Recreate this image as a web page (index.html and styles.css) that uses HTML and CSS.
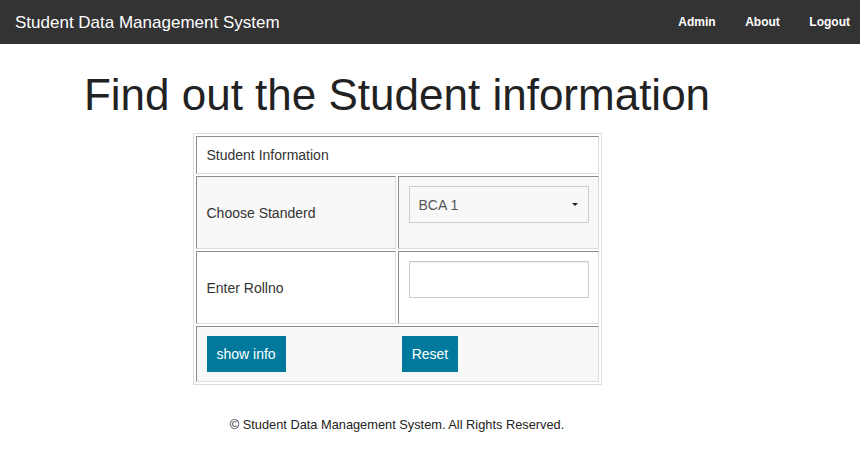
FILE: index.html
```html
<!DOCTYPE html>
<html lang="en">
<head>
<meta charset="utf-8">
<title>Student Data Management System</title>
<link rel="stylesheet" href="styles.css">
</head>
<body>
<nav class="navbar">
  <span class="brand">Student Data Management System</span>
  <ul class="nav-links">
    <li><a href="#">Admin</a></li>
    <li><a href="#">About</a></li>
    <li><a href="#">Logout</a></li>
  </ul>
</nav>
<main class="page">
  <h1 class="title">Find out the Student information</h1>
  <table class="info-table">
    <colgroup>
      <col class="col-label">
      <col class="col-field">
    </colgroup>
    <tr class="row-plain">
      <td colspan="2" class="cell head-cell">Student Information</td>
    </tr>
    <tr class="row-striped">
      <td class="cell field-row">Choose Standerd</td>
      <td class="cell field-row">
        <div class="select-wrap">
          <select class="form-control select">
            <option>BCA 1</option>
            <option>BCA 2</option>
            <option>BCA 3</option>
          </select>
          <span class="caret"></span>
        </div>
      </td>
    </tr>
    <tr class="row-plain">
      <td class="cell field-row">Enter Rollno</td>
      <td class="cell field-row">
        <input class="form-control text-input" type="text">
      </td>
    </tr>
    <tr class="row-striped">
      <td colspan="2" class="cell actions">
        <button class="btn" type="button">show info</button><button class="btn btn-reset" type="reset">Reset</button>
      </td>
    </tr>
  </table>
  <footer class="footer">© Student Data Management System. All Rights Reserved.</footer>
</main>
</body>
</html>
```
FILE: styles.css
```css
* { box-sizing: border-box; }

html, body {
  margin: 0;
  padding: 0;
  background: #fff;
  font-family: "Liberation Sans", Arial, sans-serif;
  font-size: 14px;
  color: #333;
}

.navbar {
  height: 44px;
  background: #333;
  display: flex;
  align-items: center;
  justify-content: space-between;
  padding: 1px 10px 0 15px;
}

.brand {
  color: #fff;
  font-size: 17px;
  line-height: 43px;
}

.nav-links {
  list-style: none;
  margin: 0;
  padding: 0;
  display: flex;
  gap: 29.5px;
}

.nav-links a {
  color: #fff;
  font-weight: bold;
  font-size: 12px;
  line-height: 43px;
  text-decoration: none;
}

.page {
  width: 794px;
  display: flex;
  flex-direction: column;
  align-items: center;
}

.title {
  margin: 27px 0 14px;
  font-size: 44px;
  line-height: 48px;
  font-weight: normal;
  color: #222;
}

.info-table {
  border-collapse: separate;
  border-spacing: 2px;
  border: 1px solid #ddd;
  table-layout: fixed;
  width: 409px;
}

.col-label { width: 200px; }
.col-field { width: 201px; }

.cell {
  border-style: solid;
  border-width: 1px;
  border-color: #8c8c8c #dcdcdc #dcdcdc #8c8c8c;
  padding: 8px 10px;
  line-height: 20px;
  vertical-align: middle;
}

.row-striped .cell { background: #f8f8f8; }
.row-plain .cell { background: #fff; }

.field-row {
  height: 73px;
  padding: 9px 10px 25px;
}

.field-row:first-child {
  padding: 8px 10px;
}

.form-control {
  display: block;
  width: 180px;
  height: 37px;
  border: 1px solid #ccc;
  font-family: "Liberation Sans", Arial, sans-serif;
  font-size: 14px;
  color: #555;
  padding: 0 9px;
  margin: 0;
  border-radius: 0;
}

.select-wrap {
  position: relative;
  width: 180px;
}

.select {
  appearance: none;
  -webkit-appearance: none;
  background: transparent;
}

.caret {
  position: absolute;
  right: 11px;
  top: 17px;
  width: 0;
  height: 0;
  border-left: 3px solid transparent;
  border-right: 3px solid transparent;
  border-top: 3px solid #222;
  pointer-events: none;
}

.text-input {
  background: #fff;
  box-shadow: inset 0 1px 1px rgba(0, 0, 0, 0.075);
}

.actions {
  padding: 9px 10px;
  height: 56px;
}

.btn {
  display: inline-block;
  vertical-align: top;
  height: 36px;
  padding: 0 10px;
  border: 0;
  border-radius: 0;
  background: #00799c;
  color: #fff;
  font-family: "Liberation Sans", Arial, sans-serif;
  font-size: 14px;
  line-height: 36px;
}

.btn-reset {
  margin-left: 116px;
}

.footer {
  margin-top: 30px;
  font-size: 12.8px;
  line-height: 20px;
  color: #222;
}
```
